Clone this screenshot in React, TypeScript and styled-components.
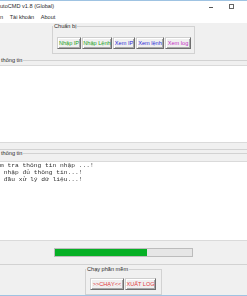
import React from "react";
import styled, { createGlobalStyle } from "styled-components";

const SANS = `"Liberation Sans", Arial, sans-serif`;
const MONO = `"Liberation Mono", "Courier New", monospace`;

const GlobalStyle = createGlobalStyle`
  html, body { margin: 0; padding: 0; width: 247px; height: 296px; overflow: hidden; background: #f0f0f0; }
  #root { width: 247px; height: 296px; overflow: hidden; }
`;

const Window = styled.div`
  display: flex;
  flex-direction: column;
  width: 279px;
  height: 296px;
  box-sizing: border-box;
  margin: 0 -16px;
  background: #f0f0f0;
  border-top: 1px solid #9fc3e2;
  border-bottom: 1px solid #9fc3e2;
  font-family: ${SANS};
  font-size: 5.6px;
  color: #2b2b2b;
  overflow: hidden;
`;

const TitleBar = styled.div`
  display: flex;
  align-items: center;
  height: 11px;
  padding-left: 16px;
  background: #fff;
`;

const Title = styled.div`
  flex: 1;
  line-height: 11px;
  white-space: nowrap;
`;

const Controls = styled.div`
  display: flex;
  height: 11px;
`;

const ControlButton = styled.div`
  width: 21px;
  height: 11px;
  display: grid;
  place-items: center;
`;

const MinGlyph = styled.span`
  width: 4px;
  height: 1px;
  margin-top: 1px;
  background: #555;
`;

const MaxGlyph = styled.span`
  width: 5px;
  height: 5px;
  box-sizing: border-box;
  border: 1px solid #666;
`;

const MenuBar = styled.div`
  display: flex;
  align-items: center;
  gap: 6.5px;
  height: 11px;
  padding-left: 16px;
  background: #fff;
`;

const MenuItem = styled.span`
  line-height: 11px;
  white-space: nowrap;
`;

const Content = styled.div`
  display: flex;
  flex-direction: column;
  flex: 1;
`;

const Group = styled.fieldset<{ $width?: number; $pad: string; $mt?: number }>`
  margin: ${(p) => p.$mt ?? 0}px 0 0;
  ${(p) => (p.$width ? `width: ${p.$width}px; align-self: center;` : "")}
  box-sizing: border-box;
  min-width: 0;
  border: 1px solid #d2d2d2;
  padding: ${(p) => p.$pad};
`;

const Legend = styled.legend<{ $offset: number }>`
  margin-left: ${(p) => p.$offset}px;
  padding: 0 1px;
  line-height: 7px;
  font-size: 5.6px;
  color: #2b2b2b;
  white-space: nowrap;
`;

const ButtonRow = styled.div`
  display: flex;
  gap: 1px;
`;

const Btn = styled.button<{ $color: string; $w: number }>`
  width: ${(p) => p.$w}px;
  height: 12px;
  padding: 0;
  box-sizing: border-box;
  font-family: ${SANS};
  font-size: 5.6px;
  line-height: 10px;
  color: ${(p) => p.$color};
  background: #f0f0f0;
  border: 1px solid;
  border-color: #cfcfcf #6e6e6e #6e6e6e #cfcfcf;
  box-shadow: inset 1px 1px 0 #fff, inset -1px -1px 0 #a8a8a8;
  white-space: nowrap;
`;

const TextBox = styled.pre<{ $h: number }>`
  margin: 0;
  height: ${(p) => p.$h}px;
  box-sizing: border-box;
  border: 1px solid #dadada;
  background: #fff;
  padding: 0 0 0 12px;
  font-family: ${MONO};
  font-size: 6.25px;
  line-height: 7px;
  color: #303030;
  white-space: pre;
  overflow: hidden;
  filter: grayscale(1);
`;

const Progress = styled.div`
  width: 139px;
  height: 9px;
  box-sizing: border-box;
  margin: 7px auto 0;
  border: 1px solid #bcbcbc;
  background: #e6e6e6;
`;

const ProgressFill = styled.div`
  height: 100%;
  background: #06b025;
`;

const prepButtons = [
  { label: "Nhập IP", color: "#22a022", w: 24 },
  { label: "Nhập Lệnh", color: "#22a022", w: 30 },
  { label: "Xem IP", color: "#2a2ad6", w: 22 },
  { label: "Xem lệnh", color: "#2a2ad6", w: 28 },
  { label: "Xem log", color: "#c42ac4", w: 26 },
];

const runButtons = [
  { label: ">>CHẠY<<", color: "#e0383c", w: 34 },
  { label: "XUẤT LOG", color: "#e0383c", w: 31 },
];

const logLines = [
  "m tra thông tin nhập ...!",
  " nhập đủ thông tin...!",
  " đầu xử lý dữ liệu...!",
];

export default function App() {
  const progress = 67;
  return (
    <>
      <GlobalStyle />
      <Window>
        <TitleBar>
          <Title>utoCMD v1.8 (Global)</Title>
          <Controls>
            <ControlButton>
              <MinGlyph />
            </ControlButton>
            <ControlButton>
              <MaxGlyph />
            </ControlButton>
            <ControlButton>
              <svg width="5" height="5" viewBox="0 0 5 5">
                <path d="M0.5 0.5 L4.5 4.5 M4.5 0.5 L0.5 4.5" stroke="#555" strokeWidth="0.8" />
              </svg>
            </ControlButton>
          </Controls>
        </TitleBar>
        <MenuBar>
          <MenuItem>n</MenuItem>
          <MenuItem>Tài khoản</MenuItem>
          <MenuItem>About</MenuItem>
        </MenuBar>
        <Content>
          <Group $width={143} $pad="7px 3px 4px 4px">
            <Legend $offset={-4}>Chuẩn bị</Legend>
            <ButtonRow>
              {prepButtons.map((b) => (
                <Btn key={b.label} $color={b.color} $w={b.w}>
                  {b.label}
                </Btn>
              ))}
            </ButtonRow>
          </Group>
          <Group $mt={3} $pad="1px 2px 6px 2px">
            <Legend $offset={13}>thông tin</Legend>
            <TextBox $h={78} />
          </Group>
          <Group $pad="4px 2px 7px 2px">
            <Legend $offset={13}>thông tin</Legend>
            <TextBox $h={80}>{logLines.join("\n")}</TextBox>
            <Progress>
              <ProgressFill style={{ width: `${progress}%` }} />
            </Progress>
          </Group>
          <Group $mt={1} $width={77} $pad="5px 5px 4px 4px">
            <Legend $offset={-4}>Chạy phần mềm</Legend>
            <ButtonRow>
              {runButtons.map((b) => (
                <Btn key={b.label} $color={b.color} $w={b.w}>
                  {b.label}
                </Btn>
              ))}
            </ButtonRow>
          </Group>
        </Content>
      </Window>
    </>
  );
}
